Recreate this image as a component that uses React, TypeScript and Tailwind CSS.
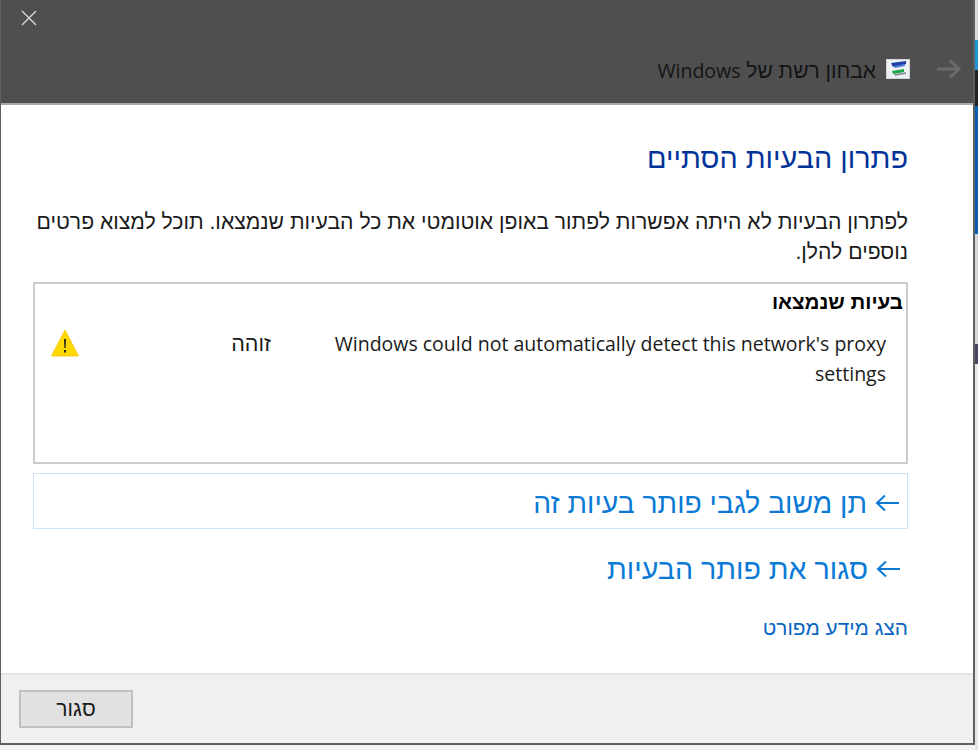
import React from "react";

// ===========================================================

function ArrowLeft({ className }: { className: string }) {
    return (
        <svg viewBox="0 0 24 18" className={className} fill="none" stroke="currentColor" strokeWidth="2">
            <path d="M24 9H2M10 1.5 2 9l8 7.5" />
        </svg>
    )
}

function ArrowRight() {
    return (
        <svg viewBox="0 0 24 20" className="w-[24px] h-[20px] text-[#6b6b6b]" fill="none" stroke="currentColor" strokeWidth="3">
            <path d="M0 10H22M13 1.5 22 10l-9 8.5" />
        </svg>
    )
}

function WarningIcon() {
    return (
        <svg viewBox="0 0 28 28" className="w-[28px] h-[28px]">
            <path d="M14 1 27.5 27H.5Z" fill="#ffd800" stroke="#f5c400" strokeWidth="0.8" />
            <path d="M13 10h2l-.4 9h-1.2Z M13 21h2v2.4h-2Z" fill="#222" />
        </svg>
    )
}

function NetworkIcon() {
    return (
        <svg viewBox="0 0 24 20" className="w-[24px] h-[20px]">
            <rect width="24" height="20" fill="#cfd6da" />
            <rect x="1" y="1" width="22" height="18" fill="#eef1f1" />
            <path d="M5 4 20 2v3L7 8Z" fill="#1d3fa8" />
            <path d="M8 7 19 5v2L9 9Z" fill="#4b7ad0" />
            <path d="M6 12 18 10v3L7 15Z" fill="#1da64a" />
            <path d="M8 15 20 13v2L9 17Z" fill="#8a9aa0" />
        </svg>
    )
}

export default function App() {
    return (
        <div dir="ltr" className="w-[978px] h-[750px] overflow-hidden flex bg-[#f2f2f2] font-['Liberation_Sans',sans-serif]">
            <div className="w-[975px] h-[745px] flex flex-col border-l border-r-2 border-b-2 border-[#5f5f5f] shrink-0">
                {/* Barre de titre */}
                <header className="h-[105px] shrink-0 bg-[#4f4f4f] border-b-2 border-[#a8a8a8] flex justify-between pl-[20px] pr-[12px]">
                    <svg viewBox="0 0 16 16" className="w-[16px] h-[16px] mt-[10px] text-[#d8d8d8]" fill="none" stroke="currentColor" strokeWidth="1.4">
                        <path d="M1 1 15 15M15 1 1 15" />
                    </svg>
                    <div className="flex items-center gap-[27px] mt-[34px] h-[70px]">
                        <div dir="rtl" className="flex items-center gap-[10px]">
                            <NetworkIcon />
                            <span className="text-[21px] leading-[28px] text-[#141414] pt-[4px]">אבחון רשת של <span className="font-['Open_Sans',sans-serif] text-[19.5px]">Windows</span></span>
                        </div>
                        <ArrowRight />
                    </div>
                </header>

                {/* Contenu */}
                <main dir="rtl" className="flex-1 bg-white pr-[65px] pl-[32px] pt-[34px] text-[#1a1a1a]">
                    <h1 className="text-[28.8px] leading-[38px] font-normal text-[#003399]">פתרון הבעיות הסתיים</h1>
                    <p className="mt-[30px] text-[21.2px] leading-[30px]">לפתרון הבעיות לא היתה אפשרות לפתור באופן אוטומטי את כל הבעיות שנמצאו. תוכל למצוא פרטים נוספים להלן.</p>
                    <section className="mt-[15px] h-[182px] border-2 border-[#cccccc] pr-[3px] pt-[4px]">
                        <h2 className="text-[20.5px] leading-[28px] font-bold text-black">בעיות שנמצאו</h2>
                        <div className="flex mt-[13px]">
                            <div dir="ltr" className="w-[615px] pr-[17px] text-right shrink-0">
                                <p dir="ltr" className="text-[19.5px] leading-[30px] font-['Open_Sans',sans-serif]">Windows could not automatically detect this network's proxy settings</p>
                            </div>
                            <span className="mr-[17px] text-[21.5px] leading-[30px]">זוהה</span>
                            <div className="flex-1 flex justify-end pl-[16px]">
                                <WarningIcon />
                            </div>
                        </div>
                    </section>
                    <a className="mt-[9px] h-[56px] border border-[#cce4f7] flex items-center gap-[8px] pr-[8px] pt-[4px] text-[28.3px] text-[#0a7ad6]">
                        <ArrowLeft className="w-[24px] h-[18px]" />
                        <span>תן משוב לגבי פותר בעיות זה</span>
                    </a>
                    <a className="mt-[12px] h-[56px] flex items-center gap-[8px] pr-[8px] text-[28.6px] text-[#0a7ad6]">
                        <ArrowLeft className="w-[24px] h-[18px]" />
                        <span>סגור את פותר הבעיות</span>
                    </a>
                    <a className="block mt-[16px] text-[20.8px] leading-[30px] text-[#0a66c2]">הצג מידע מפורט</a>
                </main>

                {/* Pied */}
                <footer className="h-[70px] shrink-0 bg-[#f0f0f0] border-t-2 border-[#e3e3e3] pl-[18px] pt-[15px]">
                    <button className="w-[114px] h-[38px] bg-[#e1e1e1] border-2 border-[#c0c0c0] text-[21px] text-[#1a1a1a]">סגור</button>
                </footer>
            </div>

            {/* Fenêtre derrière */}
            <div className="w-[3px] flex flex-col shrink-0">
                <div className="h-[40px] bg-[#d9d9d9]" />
                <div className="h-[30px] bg-[#1d9ad6]" />
                <div className="h-[36px] bg-[#222222]" />
                <div className="h-[128px] bg-[#0a5fb4]" />
                <div className="h-[110px] bg-[#d8d8d8]" />
                <div className="h-[20px] bg-[#4d4460]" />
                <div className="h-[386px] bg-[#e6e6e6]" />
            </div>
        </div>
    )
}
